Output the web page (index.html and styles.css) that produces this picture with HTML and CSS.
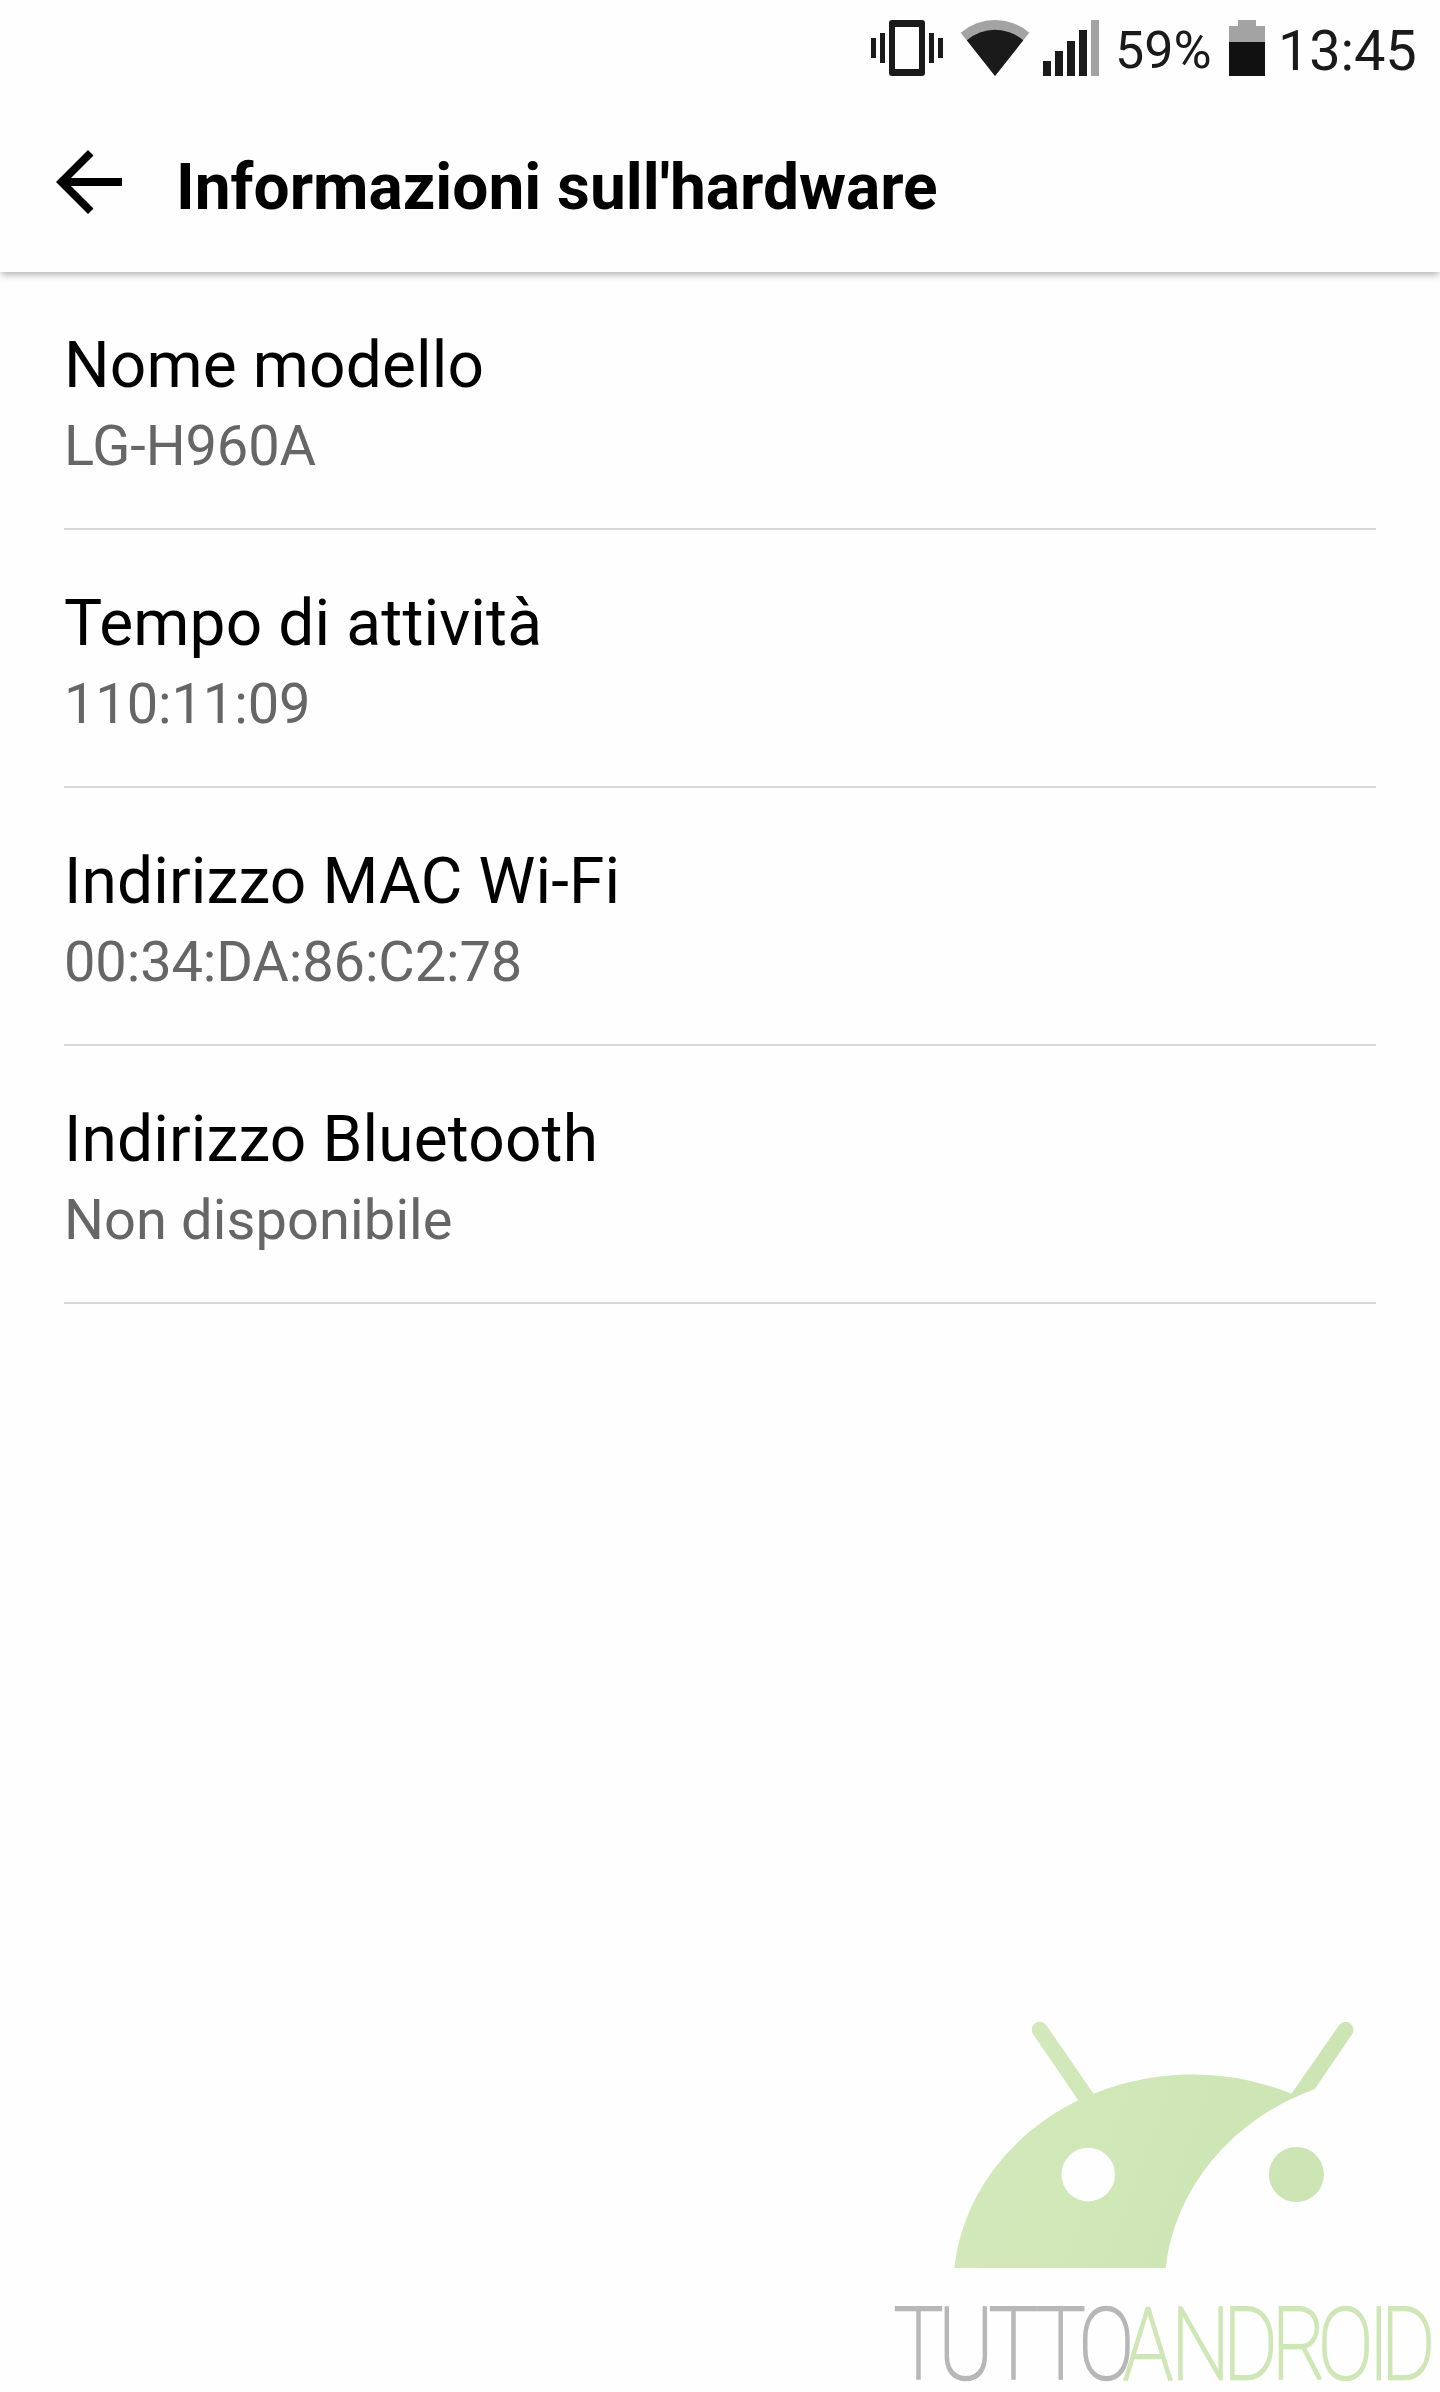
FILE: index.html
```html
<!DOCTYPE html>
<html lang="it">
<head>
    <meta charset="UTF-8">
    <meta name="viewport" content="width=device-width, initial-scale=1.0">
    <title>Informazioni sull'hardware</title>
    <link rel="stylesheet" href="styles.css">
</head>
<body>

<header class="header">
    <div class="status-bar">
        <svg class="vibrate" width="72" height="56" viewBox="0 0 72 56">
            <path d="M0 18h5v20H0zM9 13h5v30H9zM58 13h5v30h-5zM67 18h5v20h-5z"/>
            <path fill-rule="evenodd" d="M21 0h30a3 3 0 0 1 3 3v50a3 3 0 0 1-3 3H21a3 3 0 0 1-3-3V3a3 3 0 0 1 3-3zM24 7v42h24V7z"/>
        </svg>
        <svg class="wifi" width="70" height="56" viewBox="0 0 70 56">
            <path class="faded" d="M.7 12.7A52.7 52.7 0 0 1 69.3 12.7L35 56z"/>
            <path d="M6.8 20.3A43.2 43.2 0 0 1 63.2 20.3L35 56z"/>
        </svg>
        <svg class="signal" width="56" height="56" viewBox="0 0 56 56">
            <path d="M0 41h8v15H0zM12 31h8v25h-8zM24 21h8v35h-8zM36 10h8v46h-8z"/>
            <path class="faded" d="M48 0h8v56h-8z"/>
        </svg>
        <span class="percent">59%</span>
        <svg class="battery" width="36" height="56" viewBox="0 0 36 56">
            <path class="faded" d="M9 0h18v6h9v16H0V6h9z"/>
            <path class="level" d="M0 22h36v34H0z"/>
        </svg>
        <span class="clock">13:45</span>
    </div>
    <div class="title-bar">
        <svg class="back" width="66" height="64" viewBox="0 0 66 64">
            <path d="M0 32L32 0l5.5 5.5L15 28h51v8H15l22.5 22.5L32 64z"/>
        </svg>
        <h1>Informazioni sull'hardware</h1>
    </div>
</header>

<main class="list">
    <div class="item">
        <div class="name">Nome modello</div>
        <div class="value code">LG-H960A</div>
    </div>
    <div class="item">
        <div class="name">Tempo di attività</div>
        <div class="value code">110:11:09</div>
    </div>
    <div class="item">
        <div class="name">Indirizzo MAC Wi-Fi</div>
        <div class="value code">00:34:DA:86:C2:78</div>
    </div>
    <div class="item">
        <div class="name">Indirizzo Bluetooth</div>
        <div class="value">Non disponibile</div>
    </div>
</main>

<footer class="footer">
    <svg class="logo" width="560" height="392" viewBox="0 0 560 392">
        <defs>
            <linearGradient id="green" gradientUnits="userSpaceOnUse" x1="80" y1="120" x2="460" y2="260">
                <stop offset="0" stop-color="#d3e9bb"/>
                <stop offset="1" stop-color="#cbe4b2"/>
            </linearGradient>
        </defs>
        <!-- head, left eye cut out -->
        <path fill="url(#green)" fill-rule="evenodd" d="M74.3 268A239 215 0 0 1 198.2 100.3L153 34A7.8 7.8 0 0 1 166.5 25.5L213.6 93.7A239 215 0 0 1 411.4 93.7L458.5 26A7.8 7.8 0 0 1 472.5 33.5L434.6 89.3A239 215 0 0 0 285.7 268zM235 174.6a26.8 26.8 0 1 0-53.6 0a26.8 26.8 0 1 0 53.6 0z"/>
        <circle fill="url(#green)" cx="416.4" cy="174.5" r="27.5"/>
        <text class="brand" transform="translate(0 378.8) scale(.82 1)">
            <tspan class="tutto" x="16.9 71.2 132.7 190.2 242.5">TUTTO</tspan><tspan class="android" x="296.7 355.1 418.6 478 534.1 595 610.9">ANDROID</tspan>
        </text>
    </svg>
</footer>

</body>
</html>
```
FILE: styles.css
```css
* {
    box-sizing: border-box;
}

body {
    margin: 0;
    min-height: 2392px;
    display: flex;
    flex-direction: column;
    background-color: #fefefe;
    color: #000;
    font-family: Roboto, sans-serif;
}

svg {
    display: block;
    flex: none;
}

.header {
    height: 272px;
    background-color: #fefefe;
    box-shadow: 0 4px 7px -1px rgba(0, 0, 0, 0.29);
}

.status-bar {
    display: flex;
    justify-content: flex-end;
    height: 100px;
    padding: 20px 22px 0 0;
    color: #1a1a1a;
    fill: #1a1a1a;
}

.faded {
    fill: #a3a3a3;
}

.wifi {
    margin-left: 17px;
}

.signal {
    margin-left: 13px;
}

.percent {
    width: 94px;
    margin-left: 16px;
    font-size: 52px;
    line-height: 61px;
    white-space: nowrap;
}

.battery {
    margin-left: 20px;
}

.level {
    fill: #111;
}

.clock {
    width: 140px;
    margin-left: 13px;
    font-size: 56px;
    letter-spacing: -0.2px;
    line-height: 62px;
    white-space: nowrap;
}

.title-bar {
    display: flex;
    padding: 50px 56px 0;
}

.title-bar h1 {
    margin: 0 0 0 54px;
    font-size: 64px;
    font-weight: 700;
    line-height: 75px;
    white-space: nowrap;
}

.list {
    padding: 0 64px;
}

.item {
    height: 258px;
    padding-top: 56px;
    border-bottom: 2px solid #d9d9d9;
}

.name {
    font-size: 64px;
    letter-spacing: 0.15px;
    line-height: 75px;
}

.value {
    margin-top: 10px;
    color: #666;
    font-size: 56px;
    letter-spacing: 0.1px;
    line-height: 66px;
}

.code {
    letter-spacing: -0.12px;
}

.footer {
    display: flex;
    justify-content: flex-end;
    margin-top: auto;
}

.brand {
    font-size: 101px;
    font-weight: 100;
    stroke-width: 2.7px;
}

.tutto {
    fill: #b7b7b7;
    stroke: #b7b7b7;
}

.android {
    fill: #cfe7b6;
    stroke: #cfe7b6;
}
```
